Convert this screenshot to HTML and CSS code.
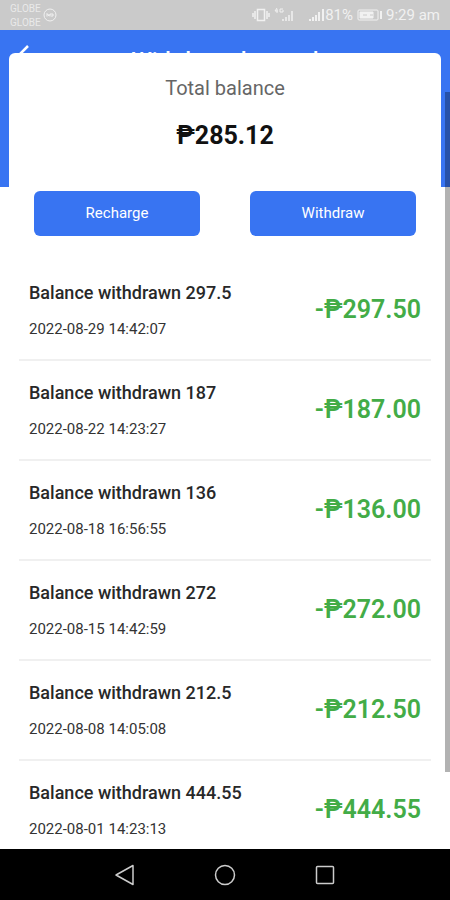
FILE: index.html
```html
<!DOCTYPE html>
<html lang="en">
<head>
<meta charset="utf-8">
<meta name="viewport" content="width=device-width, initial-scale=1">
<title>Withdrawal record</title>
<link rel="stylesheet" href="styles.css">
</head>
<body>
<div class="status">
  <div class="carriers"><span>GLOBE</span><span>GLOBE</span></div>
  <svg class="badge" width="14" height="14" viewBox="0 0 14 14" fill="none" stroke="currentColor"><circle cx="7" cy="7" r="6"/><path d="M4 8.500V5.500L6 8V6M7 8.500V6h3v2H8"/></svg>
  <div class="indicators">
    <svg width="18" height="16" viewBox="0 0 18 16" fill="none" stroke="currentColor" stroke-width="1.500"><path d="M5.500 2.500h7v11h-7zM3 4v8M15 4v8M1 6v4M17 6v4"/></svg>
    <svg class="network" width="22" height="16" viewBox="0 0 22 16" fill="none" stroke="currentColor" stroke-width="1.500"><path stroke-width="1" d="M3 1L1 4h3M3 2v4M9 2H6v3h3V3"/><path d="M9 14v-2M12 14v-4M15 14V8M18 14V4"/></svg>
    <svg width="17" height="16" viewBox="0 0 17 16" fill="none" stroke="currentColor" stroke-width="2"><path d="M2 14v-2M5 14v-4M8 14V8M11 14V5M15 14V2"/></svg>
    <span>81%</span>
    <svg class="battery" width="26" height="16" viewBox="0 0 26 16" fill="none" stroke="currentColor"><rect x="1" y="3" width="20" height="10" rx="1"/><path fill="currentColor" d="M3 5h13v6H3z"/><path stroke="#cacaca" d="M6 8h4M13 8h3"/><path stroke-width="2" d="M24 4v8"/></svg>
    <span>9:29 am</span>
  </div>
</div>
<div class="screen">
  <header class="header">
    <button class="back" type="button" aria-label="Back"><svg width="14" height="22" viewBox="0 0 14 22" fill="none" stroke="currentColor" stroke-width="2.500"><path d="M12 1L2 11l10 10"/></svg></button>
    <h1>Withdrawal record</h1>
  </header>
  <main class="main">
    <section class="card">
      <h2>Total balance</h2>
      <p class="total">₱285.12</p>
      <div class="actions">
        <button type="button">Recharge</button>
        <button type="button">Withdraw</button>
      </div>
    </section>
    <ul class="records">
      <li><div><h3>Balance withdrawn 297.5</h3><time>2022-08-29 14:42:07</time></div><strong>-₱297.50</strong></li>
      <li><div><h3>Balance withdrawn 187</h3><time>2022-08-22 14:23:27</time></div><strong>-₱187.00</strong></li>
      <li><div><h3>Balance withdrawn 136</h3><time>2022-08-18 16:56:55</time></div><strong>-₱136.00</strong></li>
      <li><div><h3>Balance withdrawn 272</h3><time>2022-08-15 14:42:59</time></div><strong>-₱272.00</strong></li>
      <li><div><h3>Balance withdrawn 212.5</h3><time>2022-08-08 14:05:08</time></div><strong>-₱212.50</strong></li>
      <li><div><h3>Balance withdrawn 444.55</h3><time>2022-08-01 14:23:13</time></div><strong>-₱444.55</strong></li>
    </ul>
  </main>
  <div class="scroll-thumb"></div>
</div>
<nav class="system">
  <button type="button" aria-label="Back"><svg width="22" height="22" viewBox="0 0 22 22" fill="none" stroke="currentColor" stroke-width="1.500" stroke-linejoin="round"><path d="M19 1.500v19L2 11z"/></svg></button>
  <button type="button" aria-label="Home"><svg width="22" height="22" viewBox="0 0 22 22" fill="none" stroke="currentColor" stroke-width="1.500"><circle cx="11" cy="11" r="9.500"/></svg></button>
  <button type="button" aria-label="Recent apps"><svg width="22" height="22" viewBox="0 0 22 22" fill="none" stroke="currentColor" stroke-width="1.500"><rect x="2.500" y="2.500" width="17" height="17" rx="1"/></svg></button>
</nav>
</body>
</html>
```
FILE: styles.css
```css
* { box-sizing: border-box; }

body {
  display: flex;
  flex-direction: column;
  height: 100vh;
  margin: 0;
  overflow: hidden;
  background: #fff;
  color: #282828;
  font-family: Roboto, sans-serif;
}

h1, h2, h3, p, ul { margin: 0; padding: 0; }
button { border: 0; padding: 0; font: inherit; }
svg { display: block; flex: none; }

.status {
  display: flex;
  flex: none;
  align-items: center;
  height: 30px;
  padding: 0 10px;
  background: #cacaca;
  color: #f1f1f1;
}

.carriers {
  display: grid;
  padding-top: 1px;
  color: #e9e9e9;
  font-size: 10px;
  line-height: 14px;
}

.badge { margin-left: 2px; }

.indicators {
  display: flex;
  align-items: center;
  margin-left: auto;
  font-size: 15px;
}

.network { margin: 0 12px 0 4px; }
.battery { margin: 0 3px 0 4px; }

.screen {
  position: relative;
  flex: 1;
  min-height: 0;
  overflow: hidden;
}

.header {
  display: grid;
  grid-template-columns: 40px 1fr 40px;
  align-items: start;
  height: 157px;
  padding-top: 15px;
  background: #3874f2;
  color: #fff;
}

.header h1 {
  font-size: 23px;
  font-weight: 500;
  line-height: 34px;
  text-align: center;
}

.back {
  justify-self: center;
  margin-left: 6px;
  background: none;
  color: inherit;
}

.main {
  position: relative;
  margin-top: -134px;
}

.card {
  margin: 0 9px;
  padding: 22px 25px 20px;
  border-radius: 6px;
  background: #fff;
  text-align: center;
}

.card h2 {
  color: #666;
  font-size: 20px;
  font-weight: 400;
  line-height: 26px;
}

.total {
  margin-top: 19px;
  color: #111;
  font-size: 25px;
  font-weight: 700;
  line-height: 32px;
}

.actions {
  display: grid;
  grid-template-columns: 1fr 1fr;
  gap: 50px;
  margin-top: 39px;
}

.actions button {
  height: 45px;
  padding-bottom: 2px;
  border-radius: 6px;
  background: #3874f2;
  color: #fff;
  font-size: 15px;
}

.records {
  margin: 5px 19px 0;
  list-style: none;
}

.records li {
  display: flex;
  align-items: center;
  justify-content: space-between;
  height: 100px;
  padding: 0 10px;
  border-bottom: 2px solid #f0f0f0;
}

.records h3 {
  font-size: 18px;
  font-weight: 500;
  line-height: 24px;
}

.records time {
  display: block;
  margin-top: 14px;
  color: #333;
  font-size: 15px;
  line-height: 20px;
}

.records strong {
  padding-bottom: 2px;
  color: #43ac47;
  font-size: 25px;
  font-weight: 600;
}

.scroll-thumb {
  position: absolute;
  top: 62px;
  right: 0;
  width: 5px;
  height: 83%;
  background: rgb(0 0 0 / 30%);
}

.system {
  display: flex;
  flex: none;
  align-items: center;
  justify-content: center;
  gap: 78px;
  height: 51px;
  background: #000;
  color: #ccc;
}

.system button {
  background: none;
  color: inherit;
}
```
